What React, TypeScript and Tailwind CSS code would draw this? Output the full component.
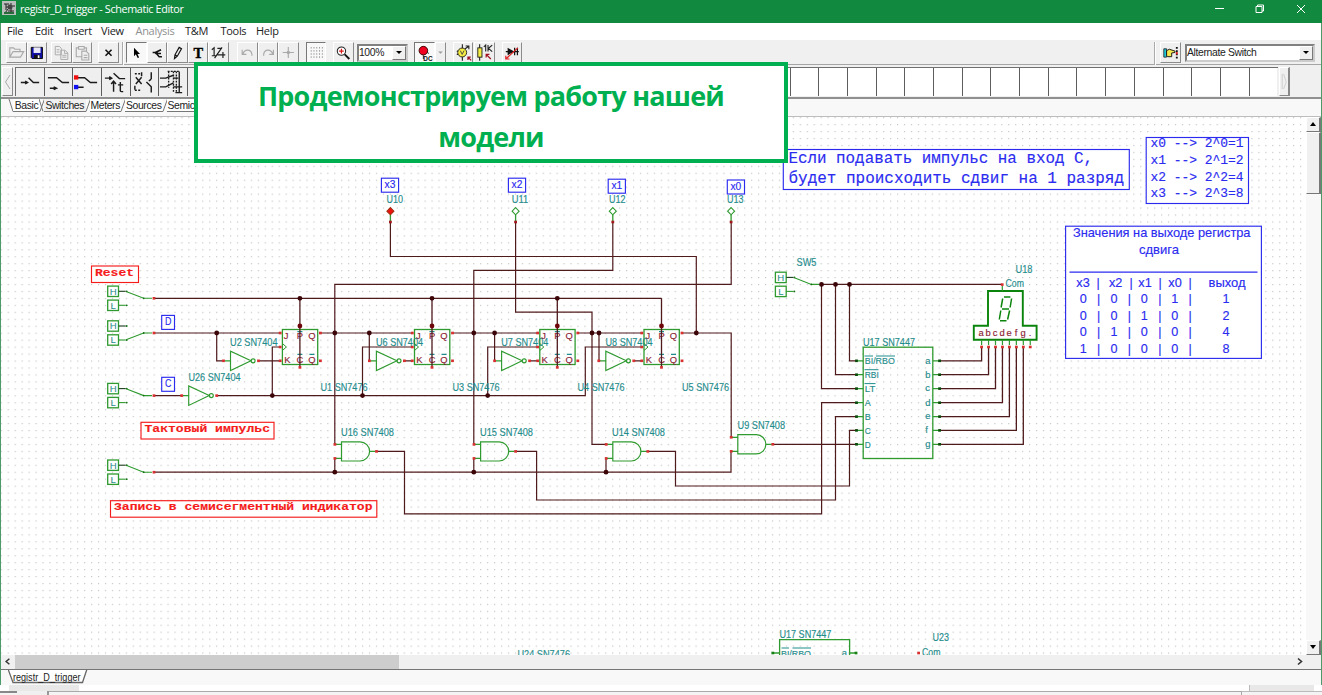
import React, { ReactNode } from "react";

const WIRE = "#4f1a1c";
const GREEN = "#2f9a2f";
const TEAL = "#1f8c8c";
const BLUE = "#2b2bf0";
const RED = "#f51c1c";
const MAROON = "#8a2232";
const SANS = "'Liberation Sans', Arial, sans-serif";
const MONO = "'Liberation Mono', 'Courier New', monospace";

type LabelProps = {
  x: number;
  y: number;
  w?: number;
  size?: number;
  fill?: string;
  font?: string;
  bold?: boolean;
  anchor?: "start" | "middle";
  children: string;
};

function Label({ x, y, w, size = 10.4, fill = TEAL, font = SANS, bold, anchor = "start", children }: LabelProps) {
  return (
    <text
      x={x}
      y={y}
      fill={fill}
      stroke={fill}
      strokeWidth={0.15}
      fontFamily={font}
      fontSize={size}
      fontWeight={bold ? 700 : 400}
      textAnchor={anchor}
      textLength={w}
      lengthAdjust="spacingAndGlyphs"
      xmlSpace="preserve"
    >
      {children}
    </text>
  );
}

const Pin = ({ x, y, c = "#d83030" }: { x: number; y: number; c?: string }) => (
  <rect x={x - 1.4} y={y - 1.3} width={2.8} height={2.6} fill={c} stroke="none" />
);
const Dot = ({ x, y, c = "#3c0508" }: { x: number; y: number; c?: string }) => <circle cx={x} cy={y} r={2.4} fill={c} />;

function LogicSwitch({ x, y, high, end }: { x: number; y: number; high: boolean; end: number }) {
  return (
    <g stroke={GREEN} fill="none" strokeWidth={1.1}>
      {[-7, 7].map((d, i) => (
        <g key={d}>
          <rect x={x} y={y + d - 5.2} width={10.8} height={10.4} strokeWidth={1.3} />
          <text x={x + 5.4} y={y + d + 3.4} fontSize={9.6} fill={TEAL} stroke="none" textAnchor="middle" fontFamily={SANS}>
            {i === 0 ? "H" : "L"}
          </text>
          <path d={`M${x + 11} ${y + d}H${x + 18}`} stroke={i === 0 ? "#1c3a1c" : GREEN} />
          <circle cx={x + 19} cy={y + d} r={0.9} fill="#117011" stroke="none" />
        </g>
      ))}
      <path d={`M${x + 19} ${y + (high ? -6.6 : 6.6)}L${x + 36} ${y}H${end}`} />
      <circle cx={x + 36} cy={y} r={0.9} fill="#117011" stroke="none" />
    </g>
  );
}

function FlipFlop({ x, top = true }: { x: number; top?: boolean }) {
  const c = x + 17.5;
  const letters: [string, number, number][] = [
    ["J", 1.4, 339.4],
    ["P", 14.4, 339.4],
    ["Q", 25.8, 339.4],
    ["K", 1.8, 363.4],
    ["C", 14.2, 363.4],
    ["Q", 25.8, 363.4],
  ];
  return (
    <g>
      <rect x={x} y={329.5} width={35.3} height={35} fill="none" stroke={GREEN} strokeWidth={1.3} />
      <path d={`M${x} 343.5l4 3.5l-4 3.5`} fill="none" stroke={GREEN} />
      {letters.map(([t, dx, y], i) => (
        <Label key={i} x={x + dx} y={y} size={9.4} fill={MAROON}>
          {t}
        </Label>
      ))}
      <path d={`M${c - 2.5} 331.6h5M${c - 2.5} 354.3h5M${x + 27} 354.3h5`} stroke={TEAL} strokeWidth={1.2} />
      <path d={`M${c} 298.3V367`} stroke={WIRE} strokeWidth={1.3} />
      {top && <Dot x={c} y={298.3} />}
      <Dot x={c} y={326} c="#6e0509" />
      <Pin x={c} y={367.4} />
      {[333, 347, 360.8].map((y) => (
        <Pin key={y} x={x - 2.2} y={y} />
      ))}
      <Pin x={x + 38} y={333} />
      <Pin x={x + 38} y={360.8} />
    </g>
  );
}

function Inverter({ x, y }: { x: number; y: number }) {
  return (
    <g fill="none" stroke={GREEN} strokeWidth={1.15}>
      <path d={`M${x} ${y - 9.6}V${y + 9.8}L${x + 20.5} ${y}ZM${x - 6} ${y}H${x}`} />
      <circle cx={x + 22.6} cy={y} r={2} />
      <Pin x={x - 7} y={y} />
      <Pin x={x + 28} y={y} />
    </g>
  );
}

function AndGate({ x, y }: { x: number; y: number }) {
  return (
    <g fill="none" stroke={GREEN} strokeWidth={1.2}>
      <path d={`M${x} ${y - 9.6}h18.5a9.6 9.6 0 0 1 0 19.2h-18.5zM${x - 6} ${y - 7}h6M${x - 6} ${y + 7}h6M${x + 28.2} ${y}h6`} />
      <Pin x={x - 6.6} y={y - 7} />
      <Pin x={x - 6.6} y={y + 7} />
      <Pin x={x + 35} y={y} />
    </g>
  );
}

function Probe({ x, on, name, lx }: { x: number; on?: boolean; name: string; lx: number }) {
  return (
    <g>
      <path d={`M${x} 215V221`} stroke={GREEN} strokeWidth={1.3} />
      <path d={`M${x} 207.6l3.5 3.6l-3.5 3.6l-3.5-3.6z`} fill={on ? "#f01010" : "#fff"} stroke={on ? "#a03010" : GREEN} strokeWidth={1.1} />
      <Pin x={x} y={222} c="#a01818" />
      <Label x={lx} y={203.2} w={16.5}>
        {name}
      </Label>
    </g>
  );
}

function Box({ x, y, w, h, c = BLUE, children }: { x: number; y: number; w: number; h: number; c?: string; children?: ReactNode }) {
  return (
    <g>
      <rect x={x} y={y} width={w} height={h} fill="#fff" stroke={c} strokeWidth={1.15} />
      {children}
    </g>
  );
}

const WIRES = [
  "M154 298.3H661.6",
  "M154 333H280M216.7 333V360.8H223M258 360.8H280",
  "M154 395.6H182M216 395.6H585.3V347H642",
  "M272.3 395.6V347H280M362.5 395.6V347H412M487.7 395.6V347H538",
  "M321 333H412M369.3 333V360.8M404 360.8H412M334.8 444.3V284.4H731.2V222",
  "M453 333H538M494.6 333V360.8M529 360.8H538M473.8 444.3V270.4H612.8V222",
  "M578 333H642M599 333V360.8M634 360.8H642M515.6 222V312.2H592V444.3H606",
  "M682 333H731.2V437.3M696.3 333V256.5H390.4V222",
  "M154 472.2H731V451.5M334.8 472.2V458.4M473.8 472.2V458.4M606 472.2V458.4",
  "M376 451.4H404.5V513.8H821.6V402.7H857",
  "M515 451.4H536.6V500H835.5V416.6H857",
  "M648 451.4H675.5V486H849.5V430.4H857",
  "M773 444.3H857",
  "M821.5 284.4H1002.2M821.5 284.4V388.6H857M835.5 284.4V374.7H857M849.5 284.4V360.8H857",
];

const PIN_Y = [360.8, 374.7, 388.6, 402.7, 416.6, 430.4, 444.3];
const JUNCTIONS: [number, number][] = [
  [216.7, 333], [334.8, 333], [369.3, 333], [473.8, 333], [494.6, 333], [592, 333], [599, 333], [696.3, 333],
  [272.3, 395.6], [362.5, 395.6], [487.7, 395.6], [334.8, 472.2], [473.8, 472.2], [606, 472.2],
  [821.5, 284.4], [835.5, 284.4], [849.5, 284.4],
];
const LABELS: [string, number, number, number][] = [
  ["U2 SN7404", 230, 346, 47.5],
  ["U6 SN7404", 376, 346, 47],
  ["U7 SN7404", 501.3, 346, 47],
  ["U8 SN7404", 605.5, 346, 47],
  ["U26 SN7404", 188.5, 381, 52],
  ["U1 SN7476", 320.5, 391, 47],
  ["U3 SN7476", 452.5, 391, 47],
  ["U4 SN7476", 577.5, 391, 47],
  ["U5 SN7476", 682, 391, 47],
  ["U16 SN7408", 341, 436.4, 53],
  ["U15 SN7408", 480, 436.4, 53],
  ["U14 SN7408", 612, 436.4, 53],
  ["U9 SN7408", 737.5, 429.4, 47.5],
  ["U17 SN7447", 863, 346, 52],
  ["U18", 1015.5, 272.8, 17],
  ["Com", 1005.5, 287, 18.5],
  ["SW5", 796.5, 265.8, 20],
  ["U17 SN7447", 779.4, 637.8, 52],
  ["U23", 932.5, 641.4, 16.5],
  ["Com", 922, 655.8, 18.5],
  ["U24 SN7476", 517.5, 658.2, 52.5],
];

function Schematic() {
  return (
    <svg className="block h-full w-full" viewBox="1 117 1305 538" preserveAspectRatio="none">
      <defs>
        <pattern id="dots" x={0.7} y={117.1} width={6.948} height={6.953} patternUnits="userSpaceOnUse">
          <rect width={1.2} height={1.2} fill="#c6c6c6" />
        </pattern>
      </defs>
      <rect x={0} y={117} width={1306} height={538} fill="#fff" />
      <rect x={0} y={117} width={1306} height={538} fill="url(#dots)" />

      <path d={WIRES.join("")} fill="none" stroke={WIRE} strokeWidth={1.2} />
      {PIN_Y.map((y, i) => (
        <path key={y} d={`M939 ${y}H${981.6 + i * 6.95}V347`} fill="none" stroke={WIRE} strokeWidth={1.3} />
      ))}
      {JUNCTIONS.map(([x, y], i) => (
        <Dot key={i} x={x} y={y} />
      ))}

      <LogicSwitch x={107.7} y={298.3} high end={152} />
      <LogicSwitch x={107.7} y={333} high={false} end={152} />
      <LogicSwitch x={107.7} y={395.6} high end={152} />
      <LogicSwitch x={107.7} y={472.2} high end={152} />
      <LogicSwitch x={775.4} y={284.4} high end={819} />
      {[298.3, 333, 395.6, 472.2].map((y) => (
        <Pin key={y} x={154} y={y} />
      ))}

      <FlipFlop x={282.4} />
      <FlipFlop x={414.5} />
      <FlipFlop x={539.8} />
      <FlipFlop x={644} top={false} />
      <Inverter x={230.5} y={360.8} />
      <Inverter x={376.4} y={360.8} />
      <Inverter x={501.6} y={360.8} />
      <Inverter x={605.8} y={360.8} />
      <Inverter x={188.7} y={395.6} />
      <AndGate x={341.5} y={451.4} />
      <AndGate x={480.6} y={451.4} />
      <AndGate x={612.8} y={451.4} />
      <AndGate x={737.8} y={444.3} />
      <Probe x={390.4} on name="U10" lx={386.5} />
      <Probe x={515.6} name="U11" lx={511.7} />
      <Probe x={612.8} name="U12" lx={609} />
      <Probe x={731.1} name="U13" lx={727} />

      {/* BCD to seven-segment decoder */}
      <rect x={863.2} y={347.2} width={69.6} height={111.3} fill="none" stroke={GREEN} strokeWidth={1.3} />
      {["BI/RBO", "RBI", "LT", "A", "B", "C", "D"].map((t, i) => (
        <g key={t}>
          <path d={`M857 ${PIN_Y[i]}h6M933 ${PIN_Y[i]}h6`} stroke={GREEN} strokeWidth={1.2} />
          <Pin x={856.5} y={PIN_Y[i]} c="#0b4d0b" />
          <Pin x={939.6} y={PIN_Y[i]} c="#0b4d0b" />
          <Label x={864.8} y={PIN_Y[i] + 3.5} size={9.6} w={[30, 14, 10.5, 6, 6, 6, 6][i]}>
            {t}
          </Label>
          <Label x={925.2} y={PIN_Y[i] + 2.8} size={9.4}>
            {"abcdefg"[i]}
          </Label>
        </g>
      ))}
      <path d="M864.5 356h8.500M876 356h19M864.500 369.700h14M864.500 383.600h11" stroke={TEAL} />

      {/* seven-segment indicator */}
      <path d="M988 291H1022.8V325.8H1036.6V339.7H973.8V325.8H988Z" fill="#fff" stroke="#0a840a" strokeWidth={1.9} />
      <path
        d="M1004 297h6.400M1002 309h7M1000 320.800h6.500M1002.700 298.500l-1.600 9M1011.600 298.500l-1.500 9M1000.800 310.500l-1.500 9M1009.600 310.500l-2 9"
        stroke="#0a840a"
        strokeWidth={1.5}
      />
      <path d="M1002.3 286V291" stroke={GREEN} strokeWidth={1.2} />
      <Pin x={1002.2} y={284.6} />
      {"abcdefg.".split("").map((t, i) => (
        <g key={t}>
          <Label x={981 + i * 7} y={335.8} size={9.4} fill={MAROON} anchor="middle">
            {t}
          </Label>
          <path d={`M${981.6 + i * 6.95} 340V345`} stroke={GREEN} strokeWidth={1.2} />
          <Pin x={981.6 + i * 6.95} y={347} />
        </g>
      ))}

      {/* lower circuit */}
      <path d="M779.6 656V639.6H849.6V656M773 653H779.6M849.6 653H856" fill="none" stroke={GREEN} strokeWidth={1.3} />
      <Pin x={772.8} y={653} c="#168016" />
      <Pin x={856} y={653} c="#168016" />
      <Pin x={918.6} y={653} />
      <path d="M781.5 648H789M792.5 648H811" stroke={TEAL} />
      <Label x={781} y={656.6} size={9.6} w={30}>
        BI/RBO
      </Label>
      <Label x={841.8} y={655.8} size={9.4}>
        a
      </Label>

      {LABELS.map(([t, x, y, w], i) => (
        <Label key={i} x={x} y={y} w={w}>
          {t}
        </Label>
      ))}

      {/* net names */}
      {(
        [
          ["x3", 381.4, 178.2, 17.2],
          ["x2", 508.4, 178.2, 17.2],
          ["x1", 608.2, 179.2, 17.2],
          ["x0", 727.3, 180, 17.2],
          ["D", 161.7, 315.4, 12.8],
          ["C", 161.7, 377.3, 12.8],
        ] as [string, number, number, number][]
      ).map(([t, x, y, w]) => (
        <Box key={t} x={x} y={y} w={w} h={14}>
          <Label x={x + w / 2} y={y + 9.8} size={10.4} fill={BLUE} anchor="middle" w={t.length > 1 ? 10.8 : 6.4}>
            {t}
          </Label>
        </Box>
      ))}

      <Box x={91.5} y={266} w={47} h={16.5} c={RED}>
        <Label x={95} y={275.5} w={39} size={11} font={MONO} fill={RED} bold>Reset</Label>
      </Box>
      <Box x={141} y={422.3} w={133} h={16.7} c={RED}>
        <Label x={144.5} y={432.2} w={125.5} size={11} font={MONO} fill={RED} bold>Тактовый импульс</Label>
      </Box>
      <Box x={110.5} y={500.7} w={266.3} h={16.5} c={RED}>
        <Label x={114} y={510.4} w={258.5} size={11} font={MONO} fill={RED} bold>Запись в семисегментный индикатор</Label>
      </Box>

      <Box x={783.3} y={149.5} w={346} h={40}>
        <Label x={788.5} y={162.8} w={304.5} size={16} font={MONO} fill={BLUE}>Если подавать импульс на вход С,</Label>
        <Label x={788.5} y={182.6} w={335.5} size={16} font={MONO} fill={BLUE}>будет происходить сдвиг на 1 разряд</Label>
      </Box>
      <Box x={1146.2} y={137.5} w={102.3} h={66}>
        {[0, 1, 2, 3].map((n) => (
          <Label key={n} x={1150.5} y={147.4 + n * 16.6} w={93} size={12} font={MONO} fill={BLUE}>
            {`x${n} --> 2^${n}=${2 ** n}`}
          </Label>
        ))}
      </Box>
      <Box x={1065.6} y={226.2} w={195.8} h={132.2}>
        <Label x={1073} y={237.4} w={177.5} size={12.8} fill={BLUE}>Значения на выходе регистра</Label>
        <Label x={1139} y={253.8} w={40} size={12.8} fill={BLUE}>сдвига</Label>
        <path d="M1069.5 272.2H1257.5" stroke={BLUE} strokeWidth={1.2} />
        {["x3", "x2", "x1", "x0", "выход"].map((t, i) => (
          <Label key={t} x={[1083, 1115.6, 1145, 1175, 1227][i]} y={286.8} w={i < 4 ? 13.4 : 37} size={12.8} fill={BLUE} anchor="middle">
            {t}
          </Label>
        ))}
        {[1098, 1131, 1160.2, 1190].map((x) => (
          <Label key={x} x={x} y={286.8} size={12.3} fill={BLUE} anchor="middle">|</Label>
        ))}
        {["00011", "00102", "01004", "10008"].map((row, r) =>
          row.split("").map((t, i) => (
            <React.Fragment key={`${r}-${i}`}>
              <Label x={[1083.3, 1114, 1144.3, 1174.8, 1226][i]} y={303.2 + r * 16.5} size={12.6} fill={BLUE} anchor="middle">
                {t}
              </Label>
              {i < 4 && (
                <Label x={[1098.7, 1129.4, 1159.8, 1190][i]} y={303.2 + r * 16.5} size={12.3} fill={BLUE} anchor="middle">
                  |
                </Label>
              )}
            </React.Fragment>
          )),
        )}
      </Box>
    </svg>
  );
}

function ToolButton({ pressed, narrow, children }: { pressed?: boolean; narrow?: boolean; children?: ReactNode }) {
  return (
    <div
      className={`${narrow ? "w-[11px]" : "w-[20.6px]"} h-[21px] shrink-0 border ${
        pressed
          ? "border-r-white border-b-white border-t-[#777] border-l-[#777] bg-[#f8f8f8]"
          : "border-t-white border-l-white border-r-[#8b8b8b] border-b-[#8b8b8b] bg-[#efefef]"
      }`}
    >
      <svg viewBox="0 0 20 20" className="h-full w-full" fill="none" preserveAspectRatio="xMidYMid meet">
        {children}
      </svg>
    </div>
  );
}

const Gap = ({ className }: { className: string }) => <div className={`shrink-0 ${className}`} />;
const Separator = () => <div className="h-[23px] w-0.5 shrink-0 border-l border-[#aaa] bg-white" />;

function Toolbar() {
  const dim = "#a9a9a9";
  return (
    <div className="flex h-[25px] items-start border-b border-[#a5a5a5] bg-[#f0f0f0] pt-[2px] pl-[5px]">
      <ToolButton>
        <path d="M3 15V5h4l1.500 1.500H14V9M3 15L6.500 9H18L14.500 15Z" stroke={dim} strokeWidth={1.2} />
      </ToolButton>
      <ToolButton>
        <path d="M3.500 4.500H15.500V16.500H4.500L3.500 15.500Z" fill="#1010a8" stroke="#000" />
        <rect x={6} y={4.500} width={7.500} height={6} fill="#e8e8f8" />
        <rect x={6.500} y={12.500} width={6.500} height={4} fill="#111" />
        <rect x={10.500} y={13} width={1.800} height={3} fill="#fff" />
      </ToolButton>
      <Gap className="w-[4px]" />
      <ToolButton>
        <path d="M3.500 3.500H8L10 5.500V12.500H3.500ZM9.500 7.500H14L17 10.500V17.500H9.500ZM13.500 8V11H17M5 7H8M5 9.500H8M11 13H15.500M11 15H15.500" stroke={dim} />
      </ToolButton>
      <ToolButton>
        <path d="M6 5H3.500V14.500H9M12 5H14.500V8M6 3.500H12V6.500H6ZM9.500 8.500H14L17 11.500V18H9.500ZM11.500 13H15.500M11.500 15.500H15.500" stroke={dim} strokeWidth={1.2} />
      </ToolButton>
      <Gap className="w-[6px]" />
      <ToolButton>
        <path d="M7 7L13.500 13.500M13.500 7L7 13.500" stroke="#111" strokeWidth={1.700} />
      </ToolButton>
      <Gap className="w-[3px]" />
      <Separator />
      <Gap className="w-[2px]" />
      <ToolButton pressed>
        <path d="M7.500 5V14L9.500 12L11.500 16L13 15.300L11.300 11.600H14Z" fill="#000" />
      </ToolButton>
      <ToolButton>
        <path d="M5 10H8M9 9.500L14 7M8 11H14M9 11L12 14.500H15" stroke="#111" strokeWidth={1.600} />
        <circle cx={9} cy={10.300} r={1.600} fill="#111" />
      </ToolButton>
      <ToolButton>
        <path d="M7 16.500L7.500 12.500L12 4.500L14.500 6L10 14L7 16.500ZM7.500 12.500L10 14" stroke="#111" strokeWidth={1.300} />
      </ToolButton>
      <ToolButton>
        <text x={10} y={15.500} fontSize={15.500} fontWeight={700} textAnchor="middle" fill="#000" stroke="#000" strokeWidth={0.400} fontFamily="'Liberation Serif', serif">T</text>
      </ToolButton>
      <ToolButton>
        <path d="M3 7L5.500 5V13M3 13.500H8M14 4.500L6 16M9 5.500L14 5.500M9 12.500H17.500M15 9.500V16" stroke="#222" strokeWidth={1.300} />
      </ToolButton>
      <Gap className="w-[8px]" />
      <ToolButton>
        <path d="M5 12C7 6 14 6 15 12V13.500M4.500 7V12H9" stroke={dim} strokeWidth={1.200} />
      </ToolButton>
      <ToolButton>
        <path d="M15 12C13 6 6 6 5 12V13.500M15.500 7V12H11" stroke={dim} strokeWidth={1.200} />
      </ToolButton>
      <ToolButton>
        <path d="M10 4V16M4 10H16" stroke={dim} strokeWidth={1.200} />
        <rect x={8.500} y={8.500} width={3} height={3} fill={dim} />
      </ToolButton>
      <Gap className="w-[7px]" />
      <ToolButton pressed>
        {[5, 8.3, 11.6, 14.9].map((y) => (
          <path key={y} d={`M4 ${y}H17`} stroke="#555" strokeDasharray="1 2" />
        ))}
      </ToolButton>
      <Gap className="w-[7px]" />
      <ToolButton>
        <circle cx={8} cy={8.500} r={4.500} stroke="#222" strokeWidth={1.100} fill="#fff" />
        <path d="M5.500 8.500H10.500M8 6V11" stroke="#d81818" strokeWidth={1.300} />
        <path d="M11.500 12L16.500 17" stroke="#111" strokeWidth={2} />
      </ToolButton>
      <Gap className="w-[3px]" />
      <Select className="w-[51px]">100%</Select>
      <Gap className="w-[6px]" />
      <ToolButton pressed>
        <circle cx={9} cy={8} r={4.600} fill="#f00020" stroke="#300" />
        <path d="M9 13V17M13 10L15 11" stroke="#222" />
        <text x={9} y={19} fontSize={8.500} fontWeight={700} textLength={10} lengthAdjust="spacingAndGlyphs" fill="#111" fontFamily={SANS}>DC</text>
      </ToolButton>
      <ToolButton narrow>
        <path d="M5 8H15L10 13Z" fill="#999" />
      </ToolButton>
      <Gap className="w-[7px]" />
      <ToolButton>
        <path d="M9 1V19M12 6L15.500 3.500M12.500 3H16V6.500M3 9L5 8M3 12H5" stroke="#222" strokeWidth={1.200} />
        <circle cx={8.800} cy={10} r={4.800} fill="#f4ec42" stroke="#222" />
        <path d="M6.800 8L8.800 12L10.800 8" stroke="#444" />
        <path d="M18.500 18.500L15 15M15 18V15H18" stroke="#a01020" strokeWidth={1.300} />
      </ToolButton>
      <Gap className="w-[1px]" />
      <ToolButton>
        <path d="M5 1V19" stroke="#222" strokeWidth={1.200} />
        <rect x={3} y={5} width={4.500} height={10} fill="#f4ec42" stroke="#222" />
        <path d="M9.500 4L11.500 2V9M14 2V9M18.500 2L14.500 5.500L18.500 9" stroke="#222" strokeWidth={1.200} />
        <path d="M17 17L12 12M12 15.500V12H15.500" stroke="#a01020" strokeWidth={1.300} />
      </ToolButton>
      <Gap className="w-[7px]" />
      <ToolButton>
        <path d="M3 9H17M12.500 5V13M15.500 5V13" stroke="#111" strokeWidth={1.300} />
        <path d="M5 5V13L12 9Z" fill="#111" />
        <path d="M16 5L3 17M3 13.500V17H7" stroke="#e02020" strokeWidth={1.300} />
      </ToolButton>
      <div className="grow" />
      <Separator />
      <Gap className="w-[4px]" />
      <ToolButton>
        <path d="M3 6H6V15H3Z" fill="#20c8d8" stroke="#111" strokeWidth={0.800} />
        <path d="M6 8L9 6.500L15 8.500V10L11.500 10.500V14.500H7L6 13Z" fill="#f4e850" stroke="#111" />
        <path d="M17 4V17" stroke="#111" strokeWidth={2} strokeDasharray="2 1.500" />
        <path d="M17 9.500V12" stroke="#e02020" strokeWidth={2} />
      </ToolButton>
      <Gap className="w-[4px]" />
      <Select className="w-[130px]">Alternate Switch</Select>
      <Gap className="w-[6px]" />
    </div>
  );
}

function Select({ className, children }: { className: string; children: string }) {
  return (
    <div className={`mt-[2px] flex h-[18px] shrink-0 items-stretch border-2 border-t-[#808080] border-l-[#808080] border-r-[#ccc] border-b-[#ccc] bg-white ${className}`}>
      <span className="min-w-0 grow whitespace-nowrap font-['Liberation_Sans'] text-[10.4px] leading-[14px] tracking-[-0.35px] text-[#222]">
        {children}
      </span>
      <span className="flex w-[14px] items-center justify-center border border-t-white border-l-white border-r-[#777] border-b-[#777] bg-[#f0f0f0]">
        <span className="border-x-[3.5px] border-t-[3.5px] border-x-transparent border-t-black" />
      </span>
    </div>
  );
}

const SWITCH_ICONS: ReactNode[] = [
  <path key="a" d="M5 14.500H11M9.500 13L12 14.500L9.500 16M13 9.500L18 14.500H24" />,
  <path key="b" d="M3 9.500H12L18 14.500H25M5 20.500H10M9 19L12 20.500L9 22" />,
  <g key="c">
    <path d="M5 9.500H12L18 14.500H25M5 19.500H11" />
    <rect x={1} y={7} width={4.500} height={4.500} fill="#f01010" stroke="none" />
    <rect x={1} y={17} width={4.500} height={4.500} fill="#1010f0" stroke="none" />
  </g>,
  <path key="d" d="M3 10H9M7.500 8.500L10 10L7.500 11.500M12 5L18 10.500H24M12 24V13M9.500 16L12 13L14.500 16M19 14V23Q19 24 22 24M16.500 17H22" />,
  <g key="e">
    <path d="M5 9L11 16M11 9L5 16M4 18V22M11 4V8M21 4V11M21 11L18.500 13M16 14L21 19V25" />
    <path d="M4 5.500H10M4 22.500H10" strokeDasharray="2 1.500" />
  </g>,
  <g key="f">
    <path d="M1 10H7L15 7M1 19H7L15 15M15 10H20M15 19H24M21 3V25M17 25H24" strokeWidth={1.400} />
    <path d="M9 3H21M10 3V20M15 3V25M18 3V25" strokeWidth={1.400} strokeDasharray="2 1.200" />
  </g>,
];

function ComponentStrip() {
  return (
    <div className="flex h-[34px] items-start border-b-2 border-[#909090] bg-[#f0f0f0] pt-[2px]">
      <div className="mr-[2px] ml-px flex h-[29px] w-[11px] shrink-0 items-center border border-white border-r-[#888] border-b-[#888]">
        <svg viewBox="0 0 9 27" className="h-full w-full">
          <path d="M7 7L2.500 14L7 21" fill="none" stroke="#aaa" />
        </svg>
      </div>
      <div className="flex h-[29px] border-t-[1.5px] border-l border-[#6f6f6f]">
        {Array.from({ length: 44 }, (_, i) => (
          <div key={i} className={`h-full w-[28.7px] shrink-0 border-r-[1.5px] ${i < 7 ? "bg-[#efefef]" : "bg-white"} ${i === 43 ? "border-[#f0f0f0]" : "border-[#5d5d5d]"}`}>
            {SWITCH_ICONS[i] && (
              <svg viewBox="0 0 28 28" className="h-[28px] w-[27px]" fill="none" stroke="#1c1c1c" strokeWidth={1.5}>
                {SWITCH_ICONS[i]}
              </svg>
            )}
          </div>
        ))}
      </div>
      <div className="ml-[1px] flex h-[29px] w-[11px] items-center border border-t-white border-l-white border-r-2 border-r-[#888] border-b-[#888]">
        <svg viewBox="0 0 9 27" className="h-full w-full">
          <path d="M2.500 5V22M4 5L7 14L4 22" fill="none" stroke="#ccc" />
        </svg>
      </div>
    </div>
  );
}

const Slant = ({ up, first }: { up?: boolean; first?: boolean }) => (
  <svg viewBox="0 0 6 13" className="-mx-[1px] h-[13px] w-[6px] shrink-0">
    {!first && <path d="M5.500 0L1 12.500" fill="none" stroke="#777" />}
    {!up && <path d={first ? "M1 0L5 12.500" : "M0 0L4 12.500"} fill="none" stroke="#777" />}
  </svg>
);

function CategoryTabs() {
  const tabs: [string, string][] = [
    ["Basic", "w-[27px]"],
    ["Switches", "w-[41.5px]"],
    ["Meters", "w-[31.5px]"],
    ["Sources", "w-[37.5px]"],
    ["Semicon", "w-[40px]"],
  ];
  return (
    <div className="flex h-[18px] items-start border-b border-[#bdbdbd] bg-[#f8f8f8] pl-[8px]">
      <Slant first />
      {tabs.map(([t, w], i) => (
        <React.Fragment key={t}>
          <div className={`flex h-[13.5px] shrink-0 justify-center border-b border-[#777] font-['Liberation_Sans'] text-[10.4px] leading-[14px] tracking-[-0.36px] text-[#222] ${w} ${i === 1 ? "bg-[#f0f0f0]" : "bg-white"}`}>
            {t}
          </div>
          <Slant up={i > 0} />
        </React.Fragment>
      ))}
    </div>
  );
}

function VerticalScroll() {
  const raised = "border border-t-white border-l-white border-r-2 border-r-[#777] border-b-[#777] bg-[#f0f0f0]";
  return (
    <div className="flex w-[15px] shrink-0 flex-col bg-[#f8f8f8]">
      <div className={`flex h-[15px] items-center justify-center ${raised}`}>
        <span className="border-x-[3.5px] border-b-[4px] border-x-transparent border-b-black" />
      </div>
      <div className={`h-[62px] ${raised}`} />
      <div className="grow" />
      <div className={`flex h-[15px] items-center justify-center ${raised}`}>
        <span className="border-x-[3.5px] border-t-[4px] border-x-transparent border-t-black" />
      </div>
    </div>
  );
}

export default function App() {
  const menu: [string, string][] = [
    ["File", "w-[28px]"],
    ["Edit", "w-[29px]"],
    ["Insert", "w-[37px]"],
    ["View", "w-[34.5px]"],
    ["Analysis", "w-[49.5px]"],
    ["T&M", "w-[35.5px]"],
    ["Tools", "w-[35.5px]"],
    ["Help", "w-[30px]"],
  ];
  return (
    <div className="relative flex h-[695px] w-[1322px] flex-col overflow-hidden bg-white">
      <header className="flex h-[22.5px] shrink-0 items-start bg-[#11893f] text-white">
        <svg viewBox="0 0 14 14" className="mt-[1px] ml-[2px] h-[14px] w-[14px]">
          <rect width={14} height={14} fill="#b9bdbb" />
          <path d="M2 3H7M4 3V9M4 6H8M9 2V11M6 10H12M3 12L6 8M10 5H13" stroke="#222" fill="none" />
          <circle cx={8} cy={6} r={2.5} fill="#444" />
          <rect x={2} y={11} width={10} height={2} fill="#276b3b" />
        </svg>
        <span className="ml-[4px] whitespace-nowrap font-['Open_Sans'] text-[10.8px] leading-[18px] tracking-[-0.36px]">
          registr_D_trigger - Schematic Editor
        </span>
        <span className="grow" />
        <svg viewBox="-12 0 112 18" className="h-[18px] w-[112px]" fill="none" stroke="#fff">
          <path d="M-7 8.500H2M34 6.500H40V12.500H34ZM35.500 6.500V5H41.500V11H40M75 5L83 13M83 5L75 13" />
        </svg>
      </header>
      <div className="flex min-h-0 grow flex-col border-x border-[#4f9a6b]">
        <nav className="flex h-[17px] shrink-0 bg-white pl-[6px] font-['Open_Sans'] text-[11px] leading-[15.5px] tracking-[-0.3px] text-[#222]">
          {menu.map(([t, w]) => (
            <span key={t} className={`${w} ${t === "Analysis" ? "text-[#8f8f8f]" : ""}`}>
              {t}
            </span>
          ))}
        </nav>
        <Toolbar />
        <ComponentStrip />
        <CategoryTabs />
        <main className="flex h-[538px] shrink-0">
          <div className="w-[1305px] shrink-0">
            <Schematic />
          </div>
          <VerticalScroll />
        </main>
        <div className="flex h-[15px] shrink-0 items-stretch border-b-[1.5px] border-[#757575] bg-[#f0f0f0]">
          <svg viewBox="0 0 15 13" className="h-[13px] w-[14px]">
            <path d="M9 3.500L5.500 6.500L9 9.500" fill="none" stroke="#333" strokeWidth={1.6} />
          </svg>
          <div className="w-[384px] bg-[#cdcdcd]" />
          <div className="grow" />
          <svg viewBox="0 0 15 13" className="mr-[14px] h-[13px] w-[15px]">
            <path d="M6 3.500L9.500 6.500L6 9.500" fill="none" stroke="#333" strokeWidth={1.6} />
          </svg>
        </div>
        <div className="flex h-[15px] shrink-0 items-start bg-[#f8f8f8] pl-[7px]">
          <svg viewBox="0 0 80 14" className="h-[14px] w-[80px]">
            <path d="M0 -1L5 12.500H74.500L79 -1" fill="#fff" stroke="#666" strokeWidth={1.3} />
            <text x={5} y={10.5} fontSize={10.6} textLength={67.5} lengthAdjust="spacingAndGlyphs" fill="#222" fontFamily={SANS}>
              registr_D_trigger
            </text>
          </svg>
        </div>
      </div>
      <footer className="flex h-[10px] shrink-0 flex-col bg-white">
        <div className="flex h-[6px] justify-between pr-[8px] pl-[9px]">
          <span className="w-[70px] bg-[#e8e8e8]" />
          <span className="w-[65px] border-l border-[#bbb] bg-[#e8e8e8]" />
        </div>
        <div className="flex h-[4px]">
          <span className="w-[17px] border-t-2 border-[#888] bg-[#f4f4f4]" />
          <span className="w-[32px] border-r-2 border-[#999] bg-[#f0f0f0]" />
          <span className="w-[1193px] border-t border-r border-[#aaa] bg-[#f4f4f4]" />
          <span className="grow border-t border-[#bbb] bg-[#f4f4f4]" />
        </div>
      </footer>

      <div className="absolute top-[62px] left-[194px] flex h-[101px] w-[594px] flex-col items-center border-4 border-[#00b050] bg-white pt-[9px] font-['Open_Sans'] text-[27px] leading-[41px] font-bold tracking-[-0.78px] whitespace-nowrap text-[#00b050]">
        <span>Продемонстрируем работу нашей</span>
        <span>модели</span>
      </div>
    </div>
  );
}
